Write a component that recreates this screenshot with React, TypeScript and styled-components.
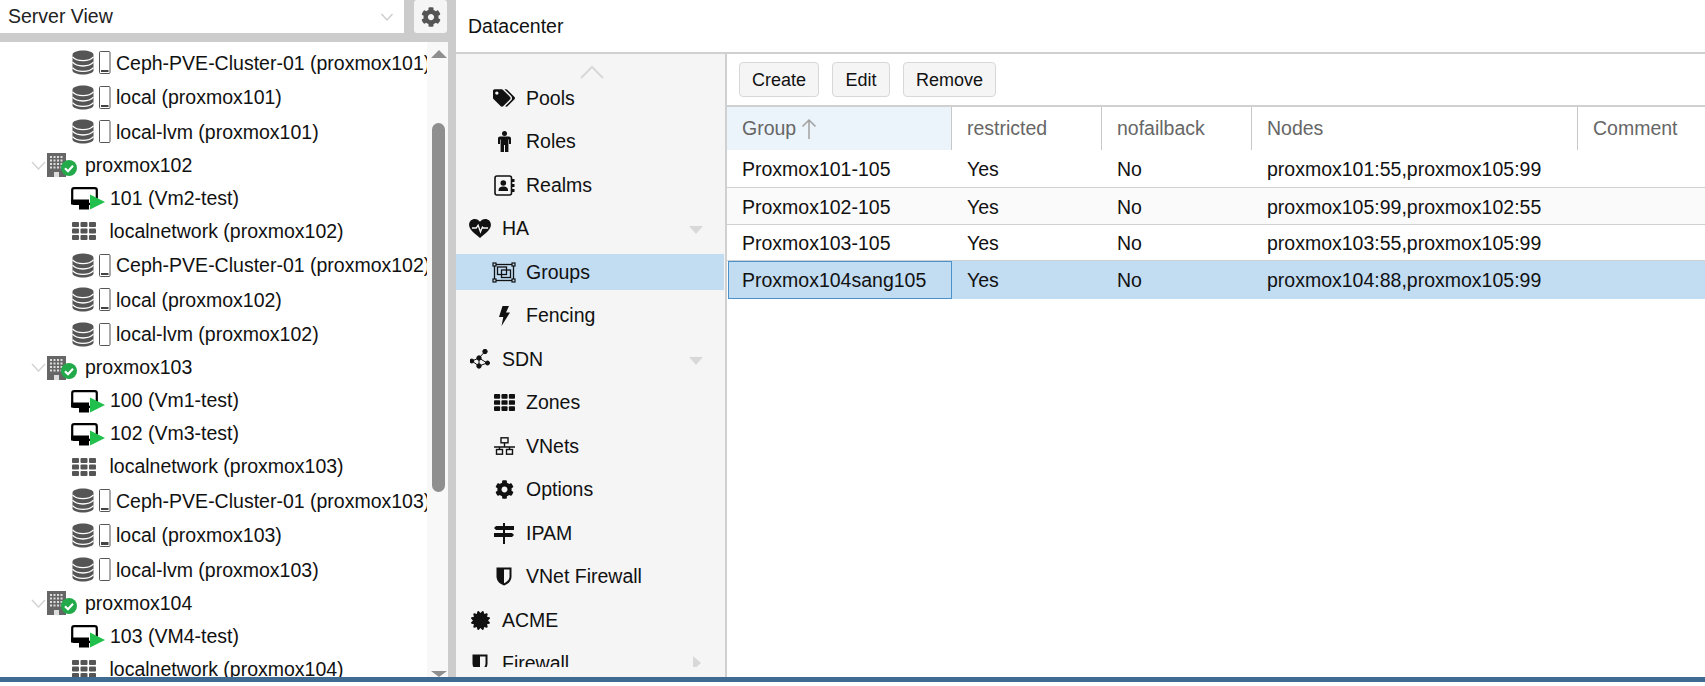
import React from "react";
import styled, { createGlobalStyle } from "styled-components";
import { FaCog, FaTags, FaCertificate } from "react-icons/fa";

const Global = createGlobalStyle`
  html, body { margin: 0; padding: 0; background: #fff; overflow: hidden; }
  * { box-sizing: border-box; }
  body { font-family: "Liberation Sans", Arial, sans-serif; font-size: 19.5px; color: #000; }
`;
const Page = styled.div`width: 1705px; height: 686px; display: flex; flex-direction: column; overflow: hidden; background: #fff;`;
const Main = styled.div`height: 677px; display: flex; overflow: hidden;`;
const BottomBar = styled.div`height: 5px; background: #3f6a92; flex: none;`;

const Side = styled.aside`width: 448px; flex: none; display: flex; flex-direction: column;`;
const SelectBar = styled.div`height: 42px; flex: none; background: #ccc; display: flex; padding-bottom: 9px; gap: 10px;`;
const Select = styled.div`width: 404px; background: #fff; display: flex; align-items: center; justify-content: space-between; padding: 0 11px 0 8px; color: #222;`;
const GearBtn = styled.div`width: 33px; background: #f5f5f5; border-radius: 3px; display: flex; align-items: center; justify-content: center; color: #555;`;
const TreeWrap = styled.div`flex: 1; position: relative; overflow: hidden; background: #fff; display: flex;`;
const Tree = styled.div`width: 427px; margin-top: 3px; overflow: hidden;`;
const Track = styled.div`position: absolute; right: 0; top: 0; bottom: 0; width: 21px; background: #f8f8f8;`;
const Thumb = styled.div`position: absolute; left: 5px; top: 81px; width: 13px; height: 369px; border-radius: 7px; background: #8f8f8f;`;
const ArrowUp = styled.div`position: absolute; left: 4px; top: 8px; border-left: 8px solid transparent; border-right: 8px solid transparent; border-bottom: 8px solid #8f8f8f;`;
const ArrowDown = styled.div`position: absolute; left: 4px; bottom: 0; border-left: 8px solid transparent; border-right: 8px solid transparent; border-top: 6px solid #8f8f8f;`;
const Row = styled.div<{ $h: number; $indent: number; $pt?: number }>`
  height: ${p => p.$h}px; padding-left: ${p => p.$indent}px; padding-top: ${p => p.$pt ?? 0}px; display: flex; align-items: center; white-space: nowrap; overflow: hidden; color: #111;
`;
const Twist = styled.span`width: 17px; flex: none; display: flex;`;
const IconSlot = styled.span<{ $w: number }>`width: ${p => p.$w}px; flex: none; display: flex; align-items: center;`;
const Splitter = styled.div`width: 8px; flex: none; background: #ccc;`;

const Content = styled.main`flex: 1; display: flex; flex-direction: column; min-width: 0;`;
const Title = styled.div`height: 54px; flex: none; padding-left: 12px; display: flex; align-items: center; border-bottom: 2px solid #d0d0d0; color: #111;`;
const Body = styled.div`flex: 1; display: flex; min-height: 0;`;
const Menu = styled.nav`width: 271px; flex: none; background: #f5f5f5; border-right: 2px solid #d0d0d0; position: relative; overflow: hidden;`;
const MenuScroll = styled.div`height: 613px; overflow: hidden; padding-top: 22.5px;`;
const MenuUp = styled.svg`position: absolute; left: 124px; top: 11px;`;
const MenuRow = styled.div`height: 43.5px; flex: none; display: flex; align-items: center; position: relative; color: #111;`;
const Highlight = styled.div`position: absolute; left: 0; right: 1px; top: 3.5px; bottom: 4px; background: #c2dcf2;`;
const MenuIcon = styled.span<{ $sub?: boolean }>`position: relative; width: 24px; margin-left: ${p => p.$sub ? 36 : 12}px; margin-right: 10px; height: 24px; flex: none; display: flex; align-items: center; justify-content: center; color: #111;`;
const MenuText = styled.span`position: relative;`;
const Caret = styled.span<{ $right?: boolean }>`
  position: absolute; left: ${p => p.$right ? 237 : 233}px; top: 19px;
  ${p => p.$right
    ? "top: 14px; border-top: 7px solid transparent; border-bottom: 7px solid transparent; border-left: 8px solid #d8d8d8;"
    : "border-left: 7.5px solid transparent; border-right: 7.5px solid transparent; border-top: 8px solid #d8d8d8;"}
`;
const Panel = styled.section`flex: 1; display: flex; flex-direction: column; min-width: 0;`;
const Toolbar = styled.div`height: 53px; flex: none; display: flex; gap: 13px; padding: 8px 0 0 12px; border-bottom: 2px solid #d0d0d0;`;
const Btn = styled.button<{ $w: number }>`width: ${p => p.$w}px; height: 35px; border: 1px solid #d8d8d8; border-radius: 4px; background: #f5f5f5; font-family: inherit; font-size: 18px; color: #111; padding: 1px 0 0;`;
const Grid = styled.div`display: grid; grid-template-columns: 225px 150px 150px 326px 1fr;`;
const Head = styled.div<{ $sorted?: boolean; $last?: boolean }>`
  height: 43px; display: flex; align-items: center; padding-left: 15px; color: #666;
  background: ${p => p.$sorted ? "#ecf4fb" : "#fff"};
  border-right: ${p => p.$last ? "none" : "1px solid #c8c8c8"};
`;
const Cell = styled.div<{ $alt?: boolean; $sel?: boolean; $focus?: boolean; $h: number }>`
  height: ${p => p.$h}px; display: flex; align-items: center; padding: 2px 0 0 15px; color: #111; white-space: nowrap;
  background: ${p => p.$sel ? "#c2dcf2" : p.$alt ? "#fafafa" : "#fff"};
  border-bottom: ${p => p.$sel ? "none" : "1px solid #d0d0d0"};
  ${p => p.$focus ? "box-shadow: inset 0 0 0 1px #4a92cc; margin-left: 1px; padding-left: 14px;" : ""}
`;
const Arrow = styled.svg`margin-left: 5px;`;
const VmSvg = styled.svg`margin-top: 2px;`;
const NodeSvg = styled.svg`margin-left: -1px;`;

const Storage = ({ level }: { level: number }) => (
  <svg width="40" height="26" viewBox="0 0 40 26">
    <path d="M0.500 4.800C0.500 2.200 5.300 0.500 11 0.500s10.500 1.700 10.500 4.300v15.400c0 2.600-4.800 4.300-10.500 4.300S0.500 22.800 0.500 20.200z" fill="#555" />
    <path d="M0.500 6.800C3 9.700 7 10.600 11 10.600s8-0.900 10.500-3.800M0.500 12.200C3 15.100 7 16 11 16s8-0.900 10.500-3.800M0.500 17.600C3 20.500 7 21.400 11 21.400s8-0.900 10.500-3.800" fill="none" stroke="#fff" strokeWidth="1.300" />
    <rect x="27.500" y="1.500" width="10.500" height="22" rx="1" fill="#fff" stroke="#555" strokeWidth="1" />
    {level > 0 && <rect x="29" y={22 - level} width="7.500" height={level} fill="#444" />}
  </svg>
);
const Vm = () => (
  <VmSvg width="34" height="24" viewBox="0 0 34 24">
    <rect x="1.200" y="1.200" width="24.600" height="15.600" rx="2" fill="#fff" stroke="#000" strokeWidth="2.200" />
    <path d="M0 12.500h18v5h-18z" fill="#000" />
    <path d="M8 17h10v5.500H8z" fill="#000" />
    <path d="M19 7.500 34 15 19 22.500z" fill="#21bf4b" />
  </VmSvg>
);
const Grid3 = ({ color, w = 24, h = 18 }: { color: string; w?: number; h?: number }) => (
  <svg width={w} height={h} viewBox="0 0 24 18" preserveAspectRatio="none" fill={color}>
    {[0, 6.500, 13].map(y => [0, 8.500, 17].map(x => <rect key={`${x}-${y}`} x={x} y={y} width="7" height="5" rx="1" />))}
  </svg>
);
const NodeIcon = () => (
  <NodeSvg width="32" height="26" viewBox="0 0 32 26">
    <rect x="0" y="1" width="19" height="24" fill="#666" />
    {[4, 7.500, 11, 14.500].map(y => [3, 6.500, 10, 13.500].map(x => <rect key={`${x}-${y}`} x={x} y={y} width="2" height="2" fill="#ddd" />))}
    <rect x="7" y="20" width="5" height="5" fill="#ddd" />
    <circle cx="22" cy="16" r="8" fill="#21a94a" />
    <path d="M18 16.200l3 3 5-5.400" fill="none" stroke="#fff" strokeWidth="2.200" />
  </NodeSvg>
);
const TwistIcon = () => (
  <svg width="15" height="9" viewBox="0 0 15 9"><path d="M1 1l6.500 7L14 1" fill="none" stroke="#d4d4d4" strokeWidth="1.500" /></svg>
);
const SelectChevron = () => (
  <svg width="12" height="8" viewBox="0 0 12 8"><path d="M0.500 1l5.500 6 5.500-6" fill="none" stroke="#ccc" strokeWidth="1.300" /></svg>
);

type T = { k: "s"; name: string; level: number } | { k: "n"; name: string } | { k: "v"; name: string } | { k: "l"; name: string };
const tree: T[] = [
  { k: "s", name: "Ceph-PVE-Cluster-01 (proxmox101)", level: 2 },
  { k: "s", name: "local (proxmox101)", level: 2 },
  { k: "s", name: "local-lvm (proxmox101)", level: 0 },
  { k: "n", name: "proxmox102" },
  { k: "v", name: "101 (Vm2-test)" },
  { k: "l", name: "localnetwork (proxmox102)" },
  { k: "s", name: "Ceph-PVE-Cluster-01 (proxmox102)", level: 2 },
  { k: "s", name: "local (proxmox102)", level: 2 },
  { k: "s", name: "local-lvm (proxmox102)", level: 0 },
  { k: "n", name: "proxmox103" },
  { k: "v", name: "100 (Vm1-test)" },
  { k: "v", name: "102 (Vm3-test)" },
  { k: "l", name: "localnetwork (proxmox103)" },
  { k: "s", name: "Ceph-PVE-Cluster-01 (proxmox103)", level: 2 },
  { k: "s", name: "local (proxmox103)", level: 3 },
  { k: "s", name: "local-lvm (proxmox103)", level: 0 },
  { k: "n", name: "proxmox104" },
  { k: "v", name: "103 (VM4-test)" },
  { k: "l", name: "localnetwork (proxmox104)" },
];

const TreeRow = ({ t }: { t: T }) => {
  if (t.k === "s") return <Row $h={34.5} $pt={2} $indent={72}><IconSlot $w={44}><Storage level={t.level} /></IconSlot>{t.name}</Row>;
  if (t.k === "n") return <Row $h={33} $indent={31}><Twist><TwistIcon /></Twist><IconSlot $w={37}><NodeIcon /></IconSlot>{t.name}</Row>;
  if (t.k === "v") return <Row $h={33} $indent={71}><IconSlot $w={39}><Vm /></IconSlot>{t.name}</Row>;
  return <Row $h={33} $indent={72}><IconSlot $w={37.500}><Grid3 color="#555" /></IconSlot>{t.name}</Row>;
};

const Shield = () => (
  <svg width="16" height="19" viewBox="0 0 16 19"><path d="M0.500 0.500h15v9c0 4.500-3.500 7.500-7.500 9-4-1.500-7.500-4.500-7.500-9z" fill="#111" /><path d="M8 2.500h5.500v7c0 3.200-2.500 5.300-5.500 6.700z" fill="#f5f5f5" /></svg>
);
const Pulse = () => (
  <svg width="22" height="19" viewBox="0 0 23 20">
    <path d="M11.500 20C7 16 0 11.500 0 6 0 2.500 2.700 0 6 0c2.300 0 4.300 1.200 5.500 3C12.700 1.200 14.700 0 17 0c3.300 0 6 2.500 6 6 0 5.500-7 10-11.500 14z" fill="#111" />
    <path d="M3 9.500h4.500l2-3 2.500 7 2-5 1 1h5" fill="none" stroke="#f5f5f5" strokeWidth="1.400" />
  </svg>
);
const ObjGroup = () => (
  <svg width="24" height="21" viewBox="0 0 24 21" fill="none" stroke="#111">
    <rect x="2.500" y="2.500" width="19" height="16" strokeWidth="1.300" />
    <rect x="5.500" y="5" width="9" height="7.500" strokeWidth="1.300" />
    <rect x="9.500" y="8" width="9" height="7.500" strokeWidth="1.300" />
    {[[2.500, 2.500], [21.500, 2.500], [2.500, 18.500], [21.500, 18.500]].map(([x, y]) => <rect key={`${x}${y}`} x={x - 1.500} y={y - 1.500} width="3" height="3" fill="#c2dcf2" strokeWidth="1.200" />)}
  </svg>
);
const Book = () => (
  <svg width="21" height="21" viewBox="0 0 21 21">
    <rect x="1" y="1" width="16.500" height="19" rx="2" fill="#f5f5f5" stroke="#111" strokeWidth="1.600" />
    <circle cx="9.300" cy="8" r="2.800" fill="#111" />
    <path d="M4.500 16c0-3.500 2-4.500 4.800-4.500s4.800 1 4.800 4.500z" fill="#111" />
    <path d="M18 4h2.500v3H18zM18 9h2.500v3H18zM18 14h2.500v3H18z" fill="#111" />
  </svg>
);
const Sdn = () => (
  <svg width="20" height="20" viewBox="0 0 20 20" fill="#111" stroke="#111" strokeWidth="1">
    <path d="M1.800 12 9 9M15 2.500 9 9M9 9l8 5M9 9v8M1.800 12 9 17M17 14 9 17" fill="none" />
    <circle cx="1.800" cy="12" r="2" /><circle cx="15" cy="2.500" r="2.200" /><circle cx="9" cy="9" r="2.200" /><circle cx="17.500" cy="14" r="2" /><circle cx="9" cy="17" r="2.200" />
  </svg>
);
const Person = () => (
  <svg width="13" height="21" viewBox="0 0 13 21" fill="#111">
    <circle cx="6.500" cy="2.500" r="2.500" />
    <path d="M2 5.500h9c1.100 0 2 .9 2 2V13h-2V8.500h-.6V21H7V14H6v7H2.600V8.500H2V13H0V7.500c0-1.100.9-2 2-2z" />
  </svg>
);
const Bolt = () => (
  <svg width="11" height="20" viewBox="0 0 11 20" fill="#111"><path d="M3.500 0H10L7 6.500h4L2.500 20 4.300 11H0z" /></svg>
);
const VNet = () => (
  <svg width="21" height="18" viewBox="0 0 21 18" fill="none" stroke="#111" strokeWidth="1.400">
    <rect x="7" y="0.800" width="7" height="5" />
    <path d="M10.500 5.800V10M0 10h21M5.500 10v2.500M15.500 10v2.500" />
    <rect x="2.500" y="12.500" width="6" height="4.700" />
    <rect x="12.500" y="12.500" width="6" height="4.700" />
  </svg>
);
const Signs = () => (
  <svg width="20" height="21" viewBox="0 0 20 21" fill="#111">
    <path d="M9 0h2v21H9z" />
    <path d="M2 3h18v4H2L0 5z" />
    <path d="M0 10h18l2 2-2 2H0z" />
  </svg>
);

const m = (label: string, icon: React.ReactNode, sub = true, extra?: React.ReactNode, sel = false) => (
  <MenuRow key={label}>
    {sel && <Highlight />}
    <MenuIcon $sub={sub}>{icon}</MenuIcon>
    <MenuText>{label}</MenuText>
    {extra}
  </MenuRow>
);

const heads = ["Group", "restricted", "nofailback", "Nodes", "Comment"];
const rows = [
  ["Proxmox101-105", "Yes", "No", "proxmox101:55,proxmox105:99", ""],
  ["Proxmox102-105", "Yes", "No", "proxmox105:99,proxmox102:55", ""],
  ["Proxmox103-105", "Yes", "No", "proxmox103:55,proxmox105:99", ""],
  ["Proxmox104sang105", "Yes", "No", "proxmox104:88,proxmox105:99", ""],
];
const rowH = [38, 37, 36, 37.500];

export default function App() {
  return (
    <Page>
      <Global />
      <Main>
        <Side>
          <SelectBar>
            <Select>Server View<SelectChevron /></Select>
            <GearBtn><FaCog size={20} /></GearBtn>
          </SelectBar>
          <TreeWrap>
            <Tree>{tree.map((t, i) => <TreeRow key={i} t={t} />)}</Tree>
            <Track><ArrowUp /><Thumb /><ArrowDown /></Track>
          </TreeWrap>
        </Side>
        <Splitter />
        <Content>
          <Title>Datacenter</Title>
          <Body>
            <Menu>
              <MenuUp width="24" height="14" viewBox="0 0 24 14"><path d="M1 13 12 2l11 11" fill="none" stroke="#d8d8d8" strokeWidth="2" /></MenuUp>
              <MenuScroll>
                {m("Pools", <FaTags size={22} />)}
                {m("Roles", <Person />)}
                {m("Realms", <Book />)}
                {m("HA", <Pulse />, false, <Caret />)}
                {m("Groups", <ObjGroup />, true, undefined, true)}
                {m("Fencing", <Bolt />)}
                {m("SDN", <Sdn />, false, <Caret />)}
                {m("Zones", <Grid3 color="#111" w={21} h={17} />)}
                {m("VNets", <VNet />)}
                {m("Options", <FaCog size={19} />)}
                {m("IPAM", <Signs />)}
                {m("VNet Firewall", <Shield />)}
                {m("ACME", <FaCertificate size={19} />, false)}
                {m("Firewall", <Shield />, false, <Caret $right />)}
              </MenuScroll>
            </Menu>
            <Panel>
              <Toolbar>
                <Btn $w={80}>Create</Btn>
                <Btn $w={58}>Edit</Btn>
                <Btn $w={93}>Remove</Btn>
              </Toolbar>
              <Grid>
                {heads.map((h, i) => (
                  <Head key={h} $sorted={i === 0} $last={i === 4}>
                    {h}
                    {i === 0 && <Arrow width="16" height="22" viewBox="0 0 16 22"><path d="M8 21V2M1.500 8.500 8 2l6.500 6.500" fill="none" stroke="#a0a0a0" strokeWidth="1.500" /></Arrow>}
                  </Head>
                ))}
                {rows.map((r, ri) => r.map((c, ci) => (
                  <Cell key={`${ri}-${ci}`} $h={rowH[ri]} $alt={ri === 1} $sel={ri === 3} $focus={ri === 3 && ci === 0}>{c}</Cell>
                )))}
              </Grid>
            </Panel>
          </Body>
        </Content>
      </Main>
      <BottomBar />
    </Page>
  );
}
